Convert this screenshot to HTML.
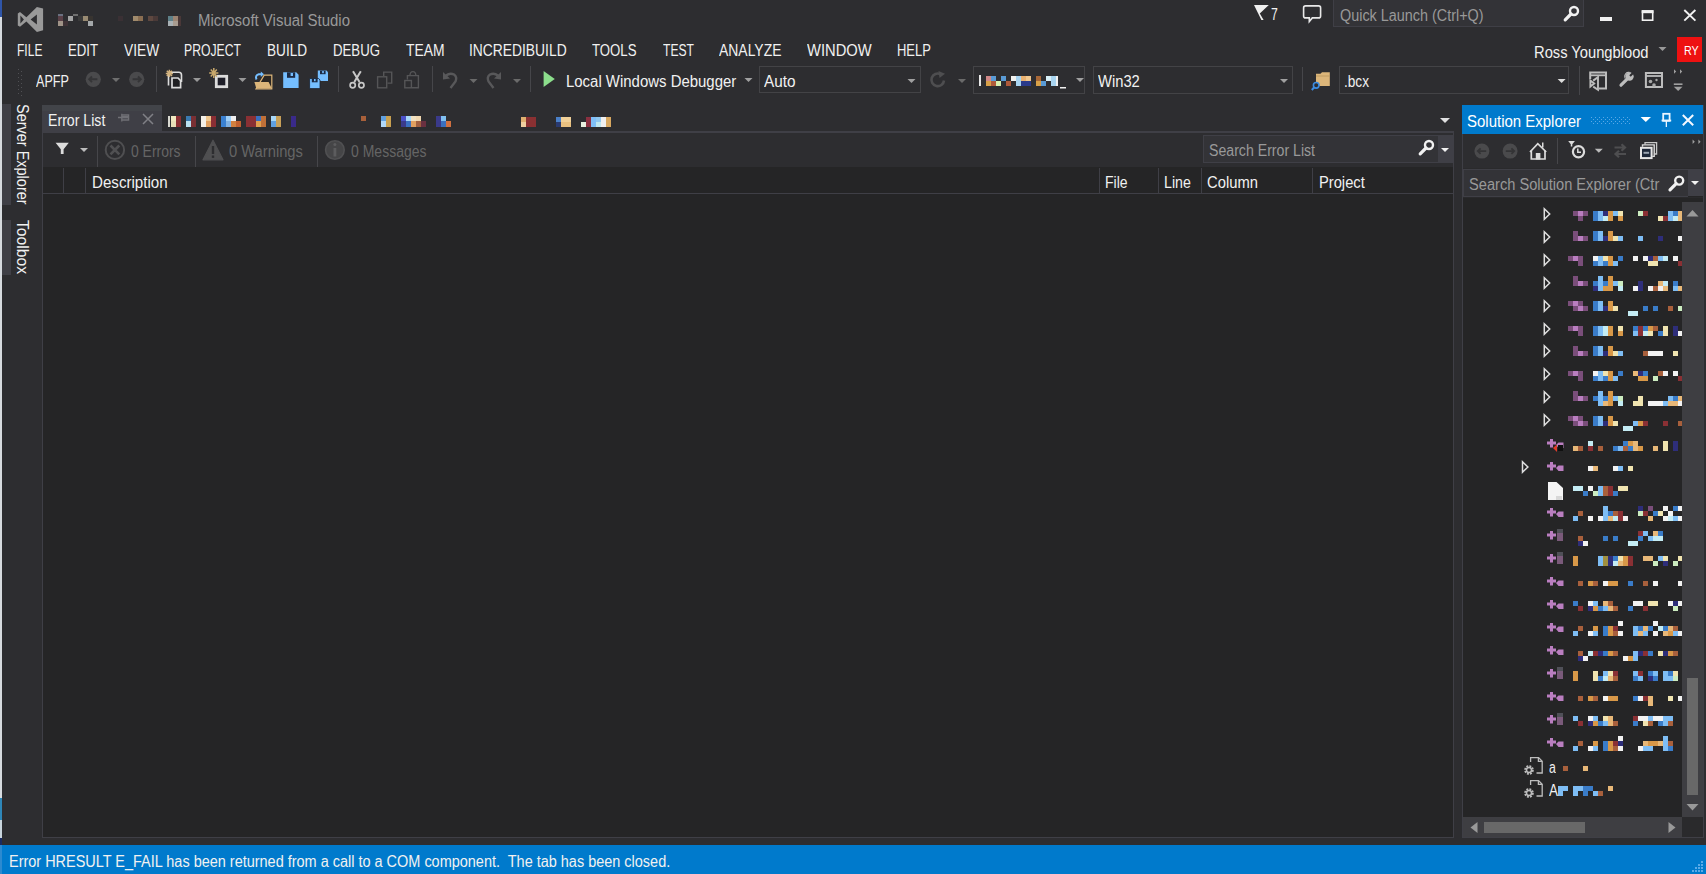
<!DOCTYPE html>
<html><head><meta charset="utf-8">
<style>
*{margin:0;padding:0;box-sizing:border-box}
html,body{width:1706px;height:874px;overflow:hidden;background:#2D2D30;font-family:"Liberation Sans",sans-serif;color:#F1F1F1;position:relative}
.a{position:absolute}
.t{position:absolute;white-space:nowrap;line-height:1}
svg{shape-rendering:geometricPrecision}
</style></head><body>
<div class="a" style="left:0px;top:0px;width:2px;height:17px;background:#2F55A8;"></div>
<div class="a" style="left:0px;top:17px;width:2px;height:781px;background:#D6DADF;"></div>
<div class="a" style="left:0px;top:798px;width:2px;height:22px;background:#2E86B8;"></div>
<div class="a" style="left:0px;top:820px;width:2px;height:18px;background:#C8D4DC;"></div>
<div class="a" style="left:0px;top:838px;width:2px;height:7px;background:#1A2A60;"></div>
<div class="a" style="left:0px;top:845px;width:2px;height:29px;background:#2C8AD0;"></div>
<svg class="a" style="left:10px;top:0px" width="40" height="40" viewBox="10 0 40 40"><path d="M17.8 13.4 L20 12 L26.4 17.3 L36.9 6.9 L43.1 8.6 L43.1 30.3 L36.9 32.1 L26.4 21.6 L20 26.8 L17.8 25.6 Z M20.4 15.6 L20.4 23.4 L23.9 19.5 Z M30.6 19.4 L36.9 24.4 L36.9 14.5 Z" fill="#999999" fill-rule="evenodd"/></svg>
<div class="t" style="left:198.20px;top:13.00px;font-size:16px;color:#999999;transform:scaleX(0.9354);transform-origin:0 0;">Microsoft Visual Studio</div>
<div class="a" style="left:58px;top:14px;width:5px;height:2px;background:#6A7080;"></div>
<div class="a" style="left:58px;top:16px;width:5px;height:5px;background:#5A4048;"></div>
<div class="a" style="left:58px;top:21px;width:5px;height:5px;background:#A09488;"></div>
<div class="a" style="left:63px;top:21px;width:5px;height:5px;background:#3E3236;"></div>
<div class="a" style="left:68px;top:16px;width:5px;height:5px;background:#A4A4A4;"></div>
<div class="a" style="left:73px;top:14px;width:5px;height:2px;background:#6E6E6E;"></div>
<div class="a" style="left:78px;top:16px;width:5px;height:5px;background:#3A3A3A;"></div>
<div class="a" style="left:83px;top:16px;width:5px;height:5px;background:#988A72;"></div>
<div class="a" style="left:88px;top:16px;width:5px;height:5px;background:#383430;"></div>
<div class="a" style="left:88px;top:21px;width:5px;height:5px;background:#A4A8AA;"></div>
<div class="a" style="left:118px;top:16px;width:5px;height:5px;background:#3A3034;"></div>
<div class="a" style="left:133px;top:16px;width:5px;height:5px;background:#A08A6C;"></div>
<div class="a" style="left:138px;top:16px;width:5px;height:5px;background:#8A6E52;"></div>
<div class="a" style="left:148px;top:16px;width:5px;height:5px;background:#5E4840;"></div>
<div class="a" style="left:153px;top:16px;width:5px;height:5px;background:#4A3A38;"></div>
<div class="a" style="left:168px;top:16px;width:5px;height:5px;background:#5E8088;"></div>
<div class="a" style="left:173px;top:16px;width:5px;height:5px;background:#9C8472;"></div>
<div class="a" style="left:168px;top:21px;width:5px;height:5px;background:#A8B0B4;"></div>
<div class="a" style="left:173px;top:21px;width:5px;height:5px;background:#A89C90;"></div>
<div class="a" style="left:178px;top:16px;width:3px;height:10px;background:#4A3838;"></div>
<div class="t" style="left:17.40px;top:43.00px;font-size:16px;color:#F1F1F1;transform:scaleX(0.7526);transform-origin:0 0;">FILE</div>
<div class="t" style="left:68.40px;top:43.00px;font-size:16px;color:#F1F1F1;transform:scaleX(0.8247);transform-origin:0 0;">EDIT</div>
<div class="t" style="left:123.80px;top:43.00px;font-size:16px;color:#F1F1F1;transform:scaleX(0.8585);transform-origin:0 0;">VIEW</div>
<div class="t" style="left:184.30px;top:43.00px;font-size:16px;color:#F1F1F1;transform:scaleX(0.7639);transform-origin:0 0;">PROJECT</div>
<div class="t" style="left:267.30px;top:43.00px;font-size:16px;color:#F1F1F1;transform:scaleX(0.8508);transform-origin:0 0;">BUILD</div>
<div class="t" style="left:333.40px;top:43.00px;font-size:16px;color:#F1F1F1;transform:scaleX(0.8246);transform-origin:0 0;">DEBUG</div>
<div class="t" style="left:406.00px;top:43.00px;font-size:16px;color:#F1F1F1;transform:scaleX(0.8674);transform-origin:0 0;">TEAM</div>
<div class="t" style="left:469.20px;top:43.00px;font-size:16px;color:#F1F1F1;transform:scaleX(0.8646);transform-origin:0 0;">INCREDIBUILD</div>
<div class="t" style="left:592.20px;top:43.00px;font-size:16px;color:#F1F1F1;transform:scaleX(0.8241);transform-origin:0 0;">TOOLS</div>
<div class="t" style="left:662.50px;top:43.00px;font-size:16px;color:#F1F1F1;transform:scaleX(0.7561);transform-origin:0 0;">TEST</div>
<div class="t" style="left:719.10px;top:43.00px;font-size:16px;color:#F1F1F1;transform:scaleX(0.8711);transform-origin:0 0;">ANALYZE</div>
<div class="t" style="left:806.90px;top:43.00px;font-size:16px;color:#F1F1F1;transform:scaleX(0.9210);transform-origin:0 0;">WINDOW</div>
<div class="t" style="left:897.20px;top:43.00px;font-size:16px;color:#F1F1F1;transform:scaleX(0.8096);transform-origin:0 0;">HELP</div>
<div class="a" style="left:18px;top:69px;width:1px;height:1px;background:#505054;"></div>
<div class="a" style="left:21px;top:71px;width:1px;height:1px;background:#505054;"></div>
<div class="a" style="left:18px;top:73px;width:1px;height:1px;background:#505054;"></div>
<div class="a" style="left:21px;top:75px;width:1px;height:1px;background:#505054;"></div>
<div class="a" style="left:18px;top:77px;width:1px;height:1px;background:#505054;"></div>
<div class="a" style="left:21px;top:79px;width:1px;height:1px;background:#505054;"></div>
<div class="a" style="left:18px;top:81px;width:1px;height:1px;background:#505054;"></div>
<div class="a" style="left:21px;top:83px;width:1px;height:1px;background:#505054;"></div>
<div class="a" style="left:18px;top:85px;width:1px;height:1px;background:#505054;"></div>
<div class="a" style="left:21px;top:87px;width:1px;height:1px;background:#505054;"></div>
<div class="a" style="left:18px;top:89px;width:1px;height:1px;background:#505054;"></div>
<div class="a" style="left:21px;top:91px;width:1px;height:1px;background:#505054;"></div>
<div class="a" style="left:18px;top:93px;width:1px;height:1px;background:#505054;"></div>
<div class="a" style="left:21px;top:95px;width:1px;height:1px;background:#505054;"></div>
<div class="t" style="left:36.00px;top:74.00px;font-size:16px;color:#F1F1F1;transform:scaleX(0.7904);transform-origin:0 0;">APFP</div>
<svg class="a" style="left:83px;top:69px" width="64" height="21" viewBox="83 69 64 21"><circle cx="93.3" cy="79.3" r="7.6" fill="#4A4A4C"/><path d="M89.2 79.3 H97.4 M92 76.5 L89.2 79.3 L92 82.1" fill="none" stroke="#353537" stroke-width="1.9"/><circle cx="136.7" cy="79.3" r="7.6" fill="#4A4A4C"/><path d="M132.6 79.3 H140.8 M138 76.5 L140.8 79.3 L138 82.1" fill="none" stroke="#353537" stroke-width="1.9"/></svg>
<svg class="a" style="left:111px;top:77px" width="11" height="7" viewBox="111 77 11 7"><path d="M112 78 L120 78 L116.0 82 Z" fill="#6E6E6E"/></svg>
<div class="a" style="left:156px;top:66px;width:1px;height:26px;background:#46464A;"></div>
<svg class="a" style="left:164px;top:66px" width="22" height="26" viewBox="164 66 22 26"><path d="M168.5 85.5 V74 Q168.5 72.2 170.3 72.2 H178.8 Q181.5 72.2 181.5 75 V82" fill="none" stroke="#DCDCDC" stroke-width="1.6"/><path d="M172 87.6 V78 H178 L180.6 80.6 V87.6 Z" fill="#1F1F22" stroke="#DCDCDC" stroke-width="1.7"/><path d="M169.4 69.8 V77 M165.8 73.4 H173 M166.8 70.8 L172 76 M172 70.8 L166.8 76" stroke="#D2B27E" stroke-width="1.5"/></svg>
<svg class="a" style="left:192px;top:77px" width="11" height="7" viewBox="192 77 11 7"><path d="M193 78 L201 78 L197.0 82 Z" fill="#999999"/></svg>
<svg class="a" style="left:206px;top:66px" width="25" height="26" viewBox="206 66 25 26"><rect x="216.3" y="76.3" width="10.4" height="10.4" fill="#1E1E28" stroke="#DCDCDC" stroke-width="2.8"/><path d="M213.8 68 V78 M209.2 73 H218.4 M210.8 69.5 L216.8 76.5 M216.8 69.5 L210.8 76.5" stroke="#C8A86C" stroke-width="1.5"/></svg>
<svg class="a" style="left:237px;top:77px" width="11" height="7" viewBox="237 77 11 7"><path d="M238.5 78 L246.5 78 L242.5 82 Z" fill="#999999"/></svg>
<svg class="a" style="left:252px;top:68px" width="23" height="23" viewBox="252 68 23 23"><path d="M264.2 75.2 H271.8 V89 H256 Z" fill="#2A2622" stroke="#DCB67A" stroke-width="1.2"/><path d="M254.4 82 H268.6 L272 88.8 H256.4 Z" fill="#DCB67A"/><path d="M256.5 79.5 Q254.8 75.5 258.8 74.3 H262" fill="none" stroke="#75BEFF" stroke-width="2"/><path d="M260.8 71.5 L264 74.3 L260.8 77.1 Z" fill="#75BEFF"/></svg>
<svg class="a" style="left:281px;top:70px" width="19" height="20" viewBox="281 70 19 20"><path d="M283.2 72.3 H296.2 L298.6 74.7 V87.9 H283.2 Z" fill="#75BEFF"/><rect x="287" y="72.3" width="8.2" height="5.5" fill="#1B2A44"/><rect x="290.6" y="73" width="2.4" height="3" fill="#75BEFF"/></svg>
<svg class="a" style="left:307px;top:68px" width="23" height="23" viewBox="307 68 23 23"><path d="M317.8 70.6 H326.5 L328 72.2 V81 H317.8 Z" fill="#75BEFF"/><rect x="320" y="70.6" width="5.6" height="3.6" fill="#1B2A44"/><rect x="322.2" y="71" width="1.6" height="2.2" fill="#75BEFF"/><path d="M309.6 78.5 H318.6 L320 80 V88.6 H309.6 Z" fill="#75BEFF" stroke="#1B2230" stroke-width="0.8"/><rect x="311.8" y="78.5" width="5.8" height="3.8" fill="#1B2A44"/><rect x="314" y="79" width="1.6" height="2.2" fill="#75BEFF"/></svg>
<div class="a" style="left:338px;top:66px;width:1px;height:26px;background:#46464A;"></div>
<svg class="a" style="left:346px;top:68px" width="22" height="23" viewBox="346 68 22 23"><path d="M353 71.3 L359.5 82 M360.8 71.3 L354.3 82" stroke="#C8C8C8" stroke-width="2"/><circle cx="352.7" cy="85.2" r="2.6" fill="none" stroke="#C8C8C8" stroke-width="1.7"/><circle cx="361.4" cy="85.2" r="2.6" fill="none" stroke="#C8C8C8" stroke-width="1.7"/></svg>
<svg class="a" style="left:374px;top:68px" width="21" height="23" viewBox="374 68 21 23"><path d="M383.7 76 V72.1 H391.7 V83.1 H387.5" fill="none" stroke="#555557" stroke-width="1.4"/><rect x="377.6" y="76.8" width="9.1" height="11" fill="none" stroke="#555557" stroke-width="1.4"/></svg>
<svg class="a" style="left:402px;top:68px" width="19" height="23" viewBox="402 68 19 23"><path d="M407.4 79.5 V75.6 H418.4 V87.8 H412" fill="none" stroke="#555557" stroke-width="1.4"/><path d="M410 75.6 Q410 71.6 412.9 71.6 Q415.8 71.6 415.8 75.6" fill="none" stroke="#555557" stroke-width="1.4"/><rect x="404.8" y="80.5" width="6.6" height="7.3" fill="none" stroke="#555557" stroke-width="1.4"/></svg>
<div class="a" style="left:432px;top:66px;width:1px;height:26px;background:#46464A;"></div>
<svg class="a" style="left:440px;top:68px" width="64" height="23" viewBox="440 68 64 23"><path d="M446 75.5 Q450 72.5 454 74.5 Q457.5 77 455.5 81.5 L450.5 88" fill="none" stroke="#58585A" stroke-width="2.4"/><path d="M443 72 L443 79.5 L450 78.5 Z" fill="#58585A"/><path d="M498 75.5 Q494 72.5 490 74.5 Q486.5 77 488.5 81.5 L493.5 88" fill="none" stroke="#58585A" stroke-width="2.4"/><path d="M501 72 L501 79.5 L494 78.5 Z" fill="#58585A"/></svg>
<svg class="a" style="left:468px;top:78px" width="11" height="7" viewBox="468 78 11 7"><path d="M469.5 79 L477.5 79 L473.5 83 Z" fill="#6A6A6A"/></svg>
<svg class="a" style="left:512px;top:78px" width="11" height="7" viewBox="512 78 11 7"><path d="M513 79 L521 79 L517.0 83 Z" fill="#6A6A6A"/></svg>
<div class="a" style="left:530px;top:66px;width:1px;height:26px;background:#46464A;"></div>
<svg class="a" style="left:541px;top:69px" width="16" height="20" viewBox="541 69 16 20"><path d="M543.6 71 L554.8 79 L543.6 87 Z" fill="#8CDE8C"/></svg>
<div class="t" style="left:565.50px;top:74.00px;font-size:16px;color:#F1F1F1;transform:scaleX(0.9339);transform-origin:0 0;">Local Windows Debugger</div>
<svg class="a" style="left:743px;top:77px" width="11" height="7" viewBox="743 77 11 7"><path d="M744.5 78 L752.5 78 L748.5 82 Z" fill="#A0A0A0"/></svg>
<div class="a" style="left:759px;top:66px;width:162px;height:27px;background:#2D2D30;border:1px solid #434346;"></div>
<div class="t" style="left:764.00px;top:74.00px;font-size:16px;color:#F1F1F1;transform:scaleX(0.9576);transform-origin:0 0;">Auto</div>
<svg class="a" style="left:906px;top:78px" width="11" height="7" viewBox="906 78 11 7"><path d="M907.5 79 L915.5 79 L911.5 83 Z" fill="#A0A0A0"/></svg>
<svg class="a" style="left:928px;top:69px" width="21" height="22" viewBox="928 69 21 22"><path d="M944 80.5 A6.3 6.3 0 1 1 940.5 74.2" fill="none" stroke="#4E4E50" stroke-width="2.6"/><path d="M938.5 71 L945 73.8 L939.5 78 Z" fill="#4E4E50"/></svg>
<svg class="a" style="left:957px;top:78px" width="11" height="7" viewBox="957 78 11 7"><path d="M958 79 L966 79 L962.0 83 Z" fill="#6A6A6A"/></svg>
<div class="a" style="left:973px;top:66px;width:112px;height:28px;background:#2D2D30;border:1px solid #434346;"></div>
<svg class="a" style="left:1075px;top:77px" width="11" height="7" viewBox="1075 77 11 7"><path d="M1076 78 L1084 78 L1080.0 82 Z" fill="#A0A0A0"/></svg>
<div class="a" style="left:1093px;top:66px;width:200px;height:28px;background:#2D2D30;border:1px solid #434346;"></div>
<div class="t" style="left:1098.00px;top:74.00px;font-size:16px;color:#F1F1F1;transform:scaleX(0.9215);transform-origin:0 0;">Win32</div>
<svg class="a" style="left:1279px;top:78px" width="11" height="7" viewBox="1279 78 11 7"><path d="M1280 79 L1288 79 L1284.0 83 Z" fill="#A0A0A0"/></svg>
<div class="a" style="left:1302px;top:67px;width:1px;height:24px;background:#46464A;"></div>
<svg class="a" style="left:1310px;top:68px" width="24" height="25" viewBox="1310 68 24 25"><path d="M1316 73.8 H1320.5 L1322 72.2 H1329.8 V86 H1316 Z" fill="#DCB67A"/><path d="M1316 76 H1329.8" stroke="#B8955A" stroke-width="0.8"/><circle cx="1316.2" cy="85.3" r="2.8" fill="#2D2D30" stroke="#3C8CE0" stroke-width="1.6"/><path d="M1314.3 87.3 L1311.8 90" stroke="#3C8CE0" stroke-width="2"/></svg>
<div class="a" style="left:1339px;top:66px;width:230px;height:28px;background:#2D2D30;border:1px solid #434346;"></div>
<div class="t" style="left:1343.70px;top:74.00px;font-size:16px;color:#F1F1F1;transform:scaleX(0.8513);transform-origin:0 0;">.bcx</div>
<svg class="a" style="left:1556px;top:78px" width="11" height="7" viewBox="1556 78 11 7"><path d="M1557.6 79 L1565.6 79 L1561.6 83 Z" fill="#DCDCDC"/></svg>
<div class="a" style="left:1579px;top:66px;width:1px;height:29px;background:#46464A;"></div>
<svg class="a" style="left:1586px;top:68px" width="100" height="26" viewBox="1586 68 100 26"><path d="M1590.2 79 V72.4 H1606 V88.4 H1599" fill="none" stroke="#BDBDBD" stroke-width="2"/><path d="M1590 75.3 H1606.2" stroke="#BDBDBD" stroke-width="1.8"/><path d="M1590.4 80.6 L1594.2 83.6 L1590.4 86.6 Z M1593.2 80.6 L1598 77.2 V89.8 L1593.2 86.6" fill="none" stroke="#BDBDBD" stroke-width="1.9"/><path d="M1621 85.2 L1626.8 79.4" stroke="#BDBDBD" stroke-width="3.2" stroke-linecap="round"/><path d="M1626 80 A3.8 3.8 0 1 1 1633.3 74.5 L1630.5 76.8 L1629.2 75.5 L1631.4 72.7 A3.8 3.8 0 0 0 1626 80 Z" fill="#BDBDBD"/><circle cx="1629.5" cy="76.6" r="4.2" fill="#BDBDBD"/><path d="M1630 76 L1634.5 71.5" stroke="#2D2D30" stroke-width="2.2"/><rect x="1645.9" y="73" width="16.1" height="14" fill="none" stroke="#BDBDBD" stroke-width="2"/><path d="M1645.7 76 H1662.2" stroke="#BDBDBD" stroke-width="1.8"/><circle cx="1650.5" cy="81.5" r="1.8" fill="#A8A8A8"/><circle cx="1654" cy="85" r="1.8" fill="#A8A8A8"/><circle cx="1656.5" cy="80" r="1.2" fill="#A8A8A8"/><path d="M1674 69.3 L1676.2 71.5 L1674 73.7 Z M1680 69.3 L1682.2 71.5 L1680 73.7 Z" fill="#A0A0A0"/><rect x="1673.8" y="83.4" width="8.7" height="1.6" fill="#A0A0A0"/><path d="M1673.8 86.8 H1682.5 L1678.15 91 Z" fill="#A0A0A0"/></svg>
<svg class="a" style="left:1252px;top:3px" width="20" height="19" viewBox="1252 3 20 19"><path d="M1254 5 H1268.8 L1259.8 13.6 L1263.6 19.9 H1261.4 Z" fill="#F0F0F0"/></svg>
<div class="t" style="left:1271.40px;top:7.00px;font-size:16px;color:#F1F1F1;transform:scaleX(0.7667);transform-origin:0 0;">7</div>
<svg class="a" style="left:1300px;top:3px" width="24" height="22" viewBox="1300 3 24 22"><path d="M1305.6 5.9 H1318.6 Q1320.6 5.9 1320.6 7.9 V15.9 Q1320.6 17.9 1318.6 17.9 H1312.3 L1309.3 21.6 V17.9 H1305.6 Q1303.6 17.9 1303.6 15.9 V7.9 Q1303.6 5.9 1305.6 5.9 Z" fill="none" stroke="#E8E8E8" stroke-width="1.6"/></svg>
<div class="a" style="left:1333px;top:-1px;width:251px;height:28px;background:#333337;border:1px solid #3F3F46;"></div>
<div class="t" style="left:1339.50px;top:8.00px;font-size:16px;color:#999999;transform:scaleX(0.8997);transform-origin:0 0;">Quick Launch (Ctrl+Q)</div>
<svg class="a" style="left:1560px;top:3px" width="22" height="21" viewBox="1560 3 22 21"><circle cx="1574" cy="11" r="4" fill="none" stroke="#F1F1F1" stroke-width="2.4"/><path d="M1571 14 L1565.2 19.8" stroke="#F1F1F1" stroke-width="3.2" stroke-linecap="round"/></svg>
<div class="a" style="left:1600px;top:17px;width:12px;height:4px;background:#F1F1F1;"></div>
<svg class="a" style="left:1638px;top:6px" width="20" height="19" viewBox="1638 6 20 19"><rect x="1642.5" y="11" width="10.2" height="9.2" fill="none" stroke="#F1F1F1" stroke-width="1.6"/><rect x="1641.7" y="10.2" width="11.8" height="3" fill="#F1F1F1"/></svg>
<svg class="a" style="left:1680px;top:6px" width="20" height="19" viewBox="1680 6 20 19"><path d="M1684.3 10 L1695.4 20.6 M1695.4 10 L1684.3 20.6" stroke="#F1F1F1" stroke-width="1.9"/></svg>
<div class="t" style="left:1533.60px;top:45.00px;font-size:16px;color:#F1F1F1;transform:scaleX(0.9197);transform-origin:0 0;">Ross Youngblood</div>
<svg class="a" style="left:1657px;top:45px" width="11" height="7" viewBox="1657 45 11 7"><path d="M1658.5 46.9 L1666.5 46.9 L1662.5 50.9 Z" fill="#999999"/></svg>
<div class="a" style="left:1677px;top:37px;width:25px;height:25px;background:#EE1111;"></div>
<div class="t" style="left:1683.60px;top:44.00px;font-size:13px;color:#FFFFFF;transform:scaleX(0.8282);transform-origin:0 0;">RY</div>
<svg class="a" style="left:975px;top:70px" width="95" height="22" viewBox="975 70 95 22"><rect x="986" y="76" width="5" height="5" fill="#D08888"/><rect x="991" y="76" width="5" height="5" fill="#5A9BD5"/><rect x="1001" y="76" width="5" height="5" fill="#5A9BD5"/><rect x="1011" y="76" width="5" height="5" fill="#F2F2EE"/><rect x="1016" y="76" width="5" height="5" fill="#A8D4F0"/><rect x="1021" y="76" width="5" height="5" fill="#E8B070"/><rect x="1026" y="76" width="5" height="5" fill="#F0C890"/><rect x="1036" y="76" width="5" height="5" fill="#A86838"/><rect x="1046" y="76" width="5" height="5" fill="#D8F0F8"/><rect x="1051" y="76" width="5" height="5" fill="#A8D4F0"/><rect x="986" y="81" width="5" height="5" fill="#D8A048"/><rect x="991" y="81" width="5" height="5" fill="#B05A3A"/><rect x="996" y="81" width="5" height="5" fill="#D8F0B0"/><rect x="1006" y="81" width="5" height="5" fill="#B05A3A"/><rect x="1016" y="81" width="5" height="5" fill="#A8D4F0"/><rect x="1021" y="81" width="5" height="5" fill="#2A3A8A"/><rect x="1026" y="81" width="5" height="5" fill="#2A3A8A"/><rect x="1036" y="81" width="5" height="5" fill="#D8A048"/><rect x="1041" y="81" width="5" height="5" fill="#5A9BD5"/><rect x="1051" y="81" width="5" height="5" fill="#A8D4F0"/><rect x="979" y="75" width="2" height="11" fill="#E8E8E8"/><rect x="1056" y="76" width="2" height="10" fill="#F0F0F0"/><rect x="1060" y="87" width="6" height="1.5" fill="#F0F0F0"/></svg>
<div class="a" style="left:2px;top:104px;width:9px;height:101px;background:#3F3F46;"></div>
<div class="a" style="left:2px;top:220px;width:9px;height:55px;background:#3F3F46;"></div>
<div class="t" style="left:14px;top:104px;font-size:16px;color:#F1F1F1;writing-mode:vertical-rl;transform:scaleY(0.905);transform-origin:0 0">Server Explorer</div>
<div class="t" style="left:14px;top:220px;font-size:16px;color:#F1F1F1;writing-mode:vertical-rl;transform:scaleY(0.98);transform-origin:0 0">Toolbox</div>
<div class="a" style="left:42px;top:105px;width:120px;height:26px;background:#3F3F46;"></div>
<div class="a" style="left:42px;top:105px;width:120px;height:6px;background:#424449;"></div>
<div class="t" style="left:47.60px;top:113.00px;font-size:16px;color:#F1F1F1;transform:scaleX(0.8831);transform-origin:0 0;">Error List</div>
<svg class="a" style="left:116px;top:111px" width="15" height="13" viewBox="116 111 15 13"><path d="M118 117.5 H121.8 M121.8 113.8 V121.4 M121.8 115 H128.6 V120 H121.8" fill="none" stroke="#707076" stroke-width="1.3"/><rect x="122" y="116" width="6.2" height="2.4" fill="#707076"/></svg>
<svg class="a" style="left:140px;top:111px" width="16" height="16" viewBox="140 111 16 16"><path d="M143 114 L153 124 M153 114 L143 124" stroke="#808086" stroke-width="1.5"/></svg>
<div class="a" style="left:168px;top:116px;width:2px;height:11px;background:#D8D8D0;"></div>
<div class="a" style="left:171px;top:116px;width:5px;height:5px;background:#F0E8C0;"></div>
<div class="a" style="left:171px;top:121px;width:5px;height:6px;background:#E8E0B8;"></div>
<div class="a" style="left:176px;top:116px;width:5px;height:11px;background:#8A3034;"></div>
<div class="a" style="left:186px;top:116px;width:5px;height:5px;background:#3A7AB0;"></div>
<div class="a" style="left:186px;top:121px;width:5px;height:6px;background:#B8E0F0;"></div>
<div class="a" style="left:191px;top:116px;width:5px;height:11px;background:#7A3034;"></div>
<div class="a" style="left:201px;top:116px;width:5px;height:11px;background:#F4F0E8;"></div>
<div class="a" style="left:206px;top:116px;width:5px;height:5px;background:#F0C890;"></div>
<div class="a" style="left:206px;top:121px;width:5px;height:6px;background:#E0A060;"></div>
<div class="a" style="left:211px;top:116px;width:5px;height:11px;background:#8A2E34;"></div>
<div class="a" style="left:221px;top:116px;width:5px;height:11px;background:#3A80D0;"></div>
<div class="a" style="left:226px;top:116px;width:5px;height:5px;background:#A0D0F8;"></div>
<div class="a" style="left:226px;top:121px;width:5px;height:6px;background:#80B0E0;"></div>
<div class="a" style="left:231px;top:116px;width:5px;height:5px;background:#F0F0F0;"></div>
<div class="a" style="left:231px;top:121px;width:5px;height:6px;background:#D08040;"></div>
<div class="a" style="left:236px;top:121px;width:5px;height:6px;background:#C06030;"></div>
<div class="a" style="left:246px;top:116px;width:10px;height:11px;background:#8A3034;"></div>
<div class="a" style="left:256px;top:116px;width:5px;height:5px;background:#3A70C0;"></div>
<div class="a" style="left:256px;top:121px;width:5px;height:6px;background:#E0A050;"></div>
<div class="a" style="left:261px;top:116px;width:5px;height:11px;background:#C07038;"></div>
<div class="a" style="left:271px;top:116px;width:5px;height:5px;background:#A8D8F8;"></div>
<div class="a" style="left:271px;top:121px;width:5px;height:6px;background:#60A0E0;"></div>
<div class="a" style="left:276px;top:116px;width:5px;height:11px;background:#C8A058;"></div>
<div class="a" style="left:291px;top:116px;width:5px;height:11px;background:#3A2A8A;"></div>
<div class="a" style="left:361px;top:116px;width:5px;height:5px;background:#A8603A;"></div>
<div class="a" style="left:381px;top:116px;width:5px;height:5px;background:#60A0E0;"></div>
<div class="a" style="left:381px;top:121px;width:5px;height:6px;background:#B0D8F8;"></div>
<div class="a" style="left:386px;top:116px;width:5px;height:11px;background:#C8A050;"></div>
<div class="a" style="left:401px;top:116px;width:5px;height:5px;background:#4A50C8;"></div>
<div class="a" style="left:401px;top:121px;width:5px;height:6px;background:#3A3A8A;"></div>
<div class="a" style="left:406px;top:116px;width:5px;height:5px;background:#A8D8F8;"></div>
<div class="a" style="left:406px;top:121px;width:5px;height:6px;background:#3A70C0;"></div>
<div class="a" style="left:411px;top:116px;width:5px;height:5px;background:#F0E0C0;"></div>
<div class="a" style="left:411px;top:121px;width:5px;height:6px;background:#E0A060;"></div>
<div class="a" style="left:416px;top:116px;width:5px;height:5px;background:#F0D8B0;"></div>
<div class="a" style="left:416px;top:121px;width:5px;height:6px;background:#A06040;"></div>
<div class="a" style="left:421px;top:121px;width:5px;height:6px;background:#6A3040;"></div>
<div class="a" style="left:521px;top:117px;width:5px;height:5px;background:#E0B070;"></div>
<div class="a" style="left:521px;top:122px;width:5px;height:5px;background:#F0D0A0;"></div>
<div class="a" style="left:526px;top:117px;width:10px;height:10px;background:#8A3032;"></div>
<div class="a" style="left:556px;top:117px;width:5px;height:5px;background:#4A80C8;"></div>
<div class="a" style="left:556px;top:122px;width:5px;height:5px;background:#2A3A70;"></div>
<div class="a" style="left:561px;top:117px;width:10px;height:5px;background:#F0D098;"></div>
<div class="a" style="left:561px;top:122px;width:10px;height:5px;background:#E8C080;"></div>
<div class="a" style="left:581px;top:122px;width:5px;height:5px;background:#E8F0E0;"></div>
<div class="a" style="left:586px;top:117px;width:5px;height:10px;background:#8A3040;"></div>
<div class="a" style="left:591px;top:117px;width:5px;height:10px;background:#80C0F8;"></div>
<div class="a" style="left:596px;top:117px;width:5px;height:5px;background:#90C8F0;"></div>
<div class="a" style="left:596px;top:122px;width:5px;height:5px;background:#C0E8F0;"></div>
<div class="a" style="left:601px;top:117px;width:5px;height:10px;background:#F0F0F0;"></div>
<div class="a" style="left:606px;top:117px;width:5px;height:10px;background:#D8A860;"></div>
<div class="a" style="left:436px;top:116px;width:5px;height:11px;background:#3A3A8A;"></div>
<div class="a" style="left:441px;top:116px;width:5px;height:5px;background:#80C0F0;"></div>
<div class="a" style="left:441px;top:121px;width:5px;height:6px;background:#3A70C0;"></div>
<div class="a" style="left:446px;top:121px;width:5px;height:6px;background:#D07040;"></div>
<svg class="a" style="left:1439px;top:117px" width="13" height="8" viewBox="1439 117 13 8"><path d="M1440 118 L1450 118 L1445.0 123 Z" fill="#E0E0E0"/></svg>
<div class="a" style="left:42px;top:131px;width:1412px;height:707px;background:#3F3F46;"></div>
<div class="a" style="left:43px;top:133px;width:1410px;height:704px;background:#252526;"></div>
<div class="a" style="left:43px;top:133px;width:1410px;height:34px;background:#2D2D30;"></div>
<svg class="a" style="left:54px;top:140px" width="18" height="17" viewBox="54 140 18 17"><path d="M55.6 142.8 H68.8 L63.6 149.2 V154 H60.8 V149.2 Z" fill="#DCDCDC"/></svg>
<svg class="a" style="left:79px;top:147px" width="11" height="7" viewBox="79 147 11 7"><path d="M80 148 L88 148 L84.0 152 Z" fill="#BBBBBB"/></svg>
<div class="a" style="left:97px;top:136px;width:1px;height:31px;background:#46464A;"></div>
<div class="a" style="left:195px;top:136px;width:1px;height:31px;background:#46464A;"></div>
<div class="a" style="left:317px;top:136px;width:1px;height:31px;background:#46464A;"></div>
<svg class="a" style="left:102px;top:137px" width="26" height="26" viewBox="102 137 26 26"><circle cx="114.9" cy="149.9" r="9.2" fill="none" stroke="#4F4F51" stroke-width="2"/><path d="M110.5 145.5 L119.3 154.3 M119.3 145.5 L110.5 154.3" stroke="#505052" stroke-width="2.6"/></svg>
<div class="t" style="left:131.40px;top:144.00px;font-size:16px;color:#656565;transform:scaleX(0.8702);transform-origin:0 0;">0 Errors</div>
<svg class="a" style="left:200px;top:137px" width="26" height="26" viewBox="200 137 26 26"><path d="M213 140.2 L223 159.8 H203 Z" fill="#4F4F51" stroke="#4F4F51" stroke-width="1.2" stroke-linejoin="round"/><rect x="211.8" y="146" width="2.4" height="8" fill="#2D2D30"/><rect x="211.8" y="155.5" width="2.4" height="2.4" fill="#2D2D30"/></svg>
<div class="t" style="left:229.30px;top:144.00px;font-size:16px;color:#656565;transform:scaleX(0.9196);transform-origin:0 0;">0 Warnings</div>
<svg class="a" style="left:322px;top:137px" width="26" height="26" viewBox="322 137 26 26"><circle cx="334.9" cy="150" r="9.3" fill="#454547" stroke="#505052" stroke-width="1.6"/><rect x="333.5" y="148" width="2.8" height="8.5" fill="#5C5C5E"/><circle cx="334.9" cy="144.6" r="1.5" fill="#5C5C5E"/></svg>
<div class="t" style="left:351.20px;top:144.00px;font-size:16px;color:#656565;transform:scaleX(0.8754);transform-origin:0 0;">0 Messages</div>
<div class="a" style="left:1203px;top:135px;width:236px;height:28px;background:#333337;border:1px solid #3F3F46;"></div>
<div class="a" style="left:1438px;top:135px;width:15px;height:28px;background:#3F3F46;"></div>
<div class="t" style="left:1209.00px;top:143.00px;font-size:16px;color:#999999;transform:scaleX(0.8833);transform-origin:0 0;">Search Error List</div>
<svg class="a" style="left:1414px;top:139px" width="24" height="21" viewBox="1414 139 24 21"><circle cx="1429" cy="145" r="4" fill="none" stroke="#F1F1F1" stroke-width="2.4"/><path d="M1426 148 L1420.2 153.8" stroke="#F1F1F1" stroke-width="3.2" stroke-linecap="round"/></svg>
<svg class="a" style="left:1440px;top:147px" width="11" height="7" viewBox="1440 147 11 7"><path d="M1441 148 L1449 148 L1445.0 152 Z" fill="#F1F1F1"/></svg>
<div class="a" style="left:43px;top:167px;width:1410px;height:26px;background:#252526;"></div>
<div class="a" style="left:43px;top:193px;width:1410px;height:1px;background:#3F3F46;"></div>
<div class="a" style="left:63px;top:168px;width:1px;height:25px;background:#3F3F46;"></div>
<div class="a" style="left:85px;top:168px;width:1px;height:25px;background:#3F3F46;"></div>
<div class="a" style="left:1099px;top:168px;width:1px;height:25px;background:#3F3F46;"></div>
<div class="a" style="left:1158px;top:168px;width:1px;height:25px;background:#3F3F46;"></div>
<div class="a" style="left:1201px;top:168px;width:1px;height:25px;background:#3F3F46;"></div>
<div class="a" style="left:1312px;top:168px;width:1px;height:25px;background:#3F3F46;"></div>
<div class="t" style="left:91.60px;top:175.00px;font-size:16px;color:#F1F1F1;transform:scaleX(0.9450);transform-origin:0 0;">Description</div>
<div class="t" style="left:1105.10px;top:175.00px;font-size:16px;color:#F1F1F1;transform:scaleX(0.8738);transform-origin:0 0;">File</div>
<div class="t" style="left:1164.10px;top:175.00px;font-size:16px;color:#F1F1F1;transform:scaleX(0.8860);transform-origin:0 0;">Line</div>
<div class="t" style="left:1206.90px;top:175.00px;font-size:16px;color:#F1F1F1;transform:scaleX(0.9231);transform-origin:0 0;">Column</div>
<div class="t" style="left:1318.50px;top:175.00px;font-size:16px;color:#F1F1F1;transform:scaleX(0.9186);transform-origin:0 0;">Project</div>
<div class="a" style="left:1462px;top:105px;width:242px;height:733px;background:#3F3F46;"></div>
<div class="a" style="left:1463px;top:134px;width:240px;height:703px;background:#252526;"></div>
<div class="a" style="left:1462px;top:105px;width:241px;height:29px;background:#007ACC;"></div>
<div class="t" style="left:1467.00px;top:114.00px;font-size:16px;color:#FFFFFF;transform:scaleX(0.9363);transform-origin:0 0;">Solution Explorer</div>
<svg class="a" style="left:1588px;top:114px" width="46" height="12" viewBox="1588 114 46 12"><rect x="1591" y="117" width="1" height="1" fill="#5AA8E6"/><rect x="1593" y="119" width="1" height="1" fill="#5AA8E6"/><rect x="1591" y="121" width="1" height="1" fill="#5AA8E6"/><rect x="1593" y="123" width="1" height="1" fill="#5AA8E6"/><rect x="1595" y="117" width="1" height="1" fill="#5AA8E6"/><rect x="1597" y="119" width="1" height="1" fill="#5AA8E6"/><rect x="1595" y="121" width="1" height="1" fill="#5AA8E6"/><rect x="1597" y="123" width="1" height="1" fill="#5AA8E6"/><rect x="1599" y="117" width="1" height="1" fill="#5AA8E6"/><rect x="1601" y="119" width="1" height="1" fill="#5AA8E6"/><rect x="1599" y="121" width="1" height="1" fill="#5AA8E6"/><rect x="1601" y="123" width="1" height="1" fill="#5AA8E6"/><rect x="1603" y="117" width="1" height="1" fill="#5AA8E6"/><rect x="1605" y="119" width="1" height="1" fill="#5AA8E6"/><rect x="1603" y="121" width="1" height="1" fill="#5AA8E6"/><rect x="1605" y="123" width="1" height="1" fill="#5AA8E6"/><rect x="1607" y="117" width="1" height="1" fill="#5AA8E6"/><rect x="1609" y="119" width="1" height="1" fill="#5AA8E6"/><rect x="1607" y="121" width="1" height="1" fill="#5AA8E6"/><rect x="1609" y="123" width="1" height="1" fill="#5AA8E6"/><rect x="1611" y="117" width="1" height="1" fill="#5AA8E6"/><rect x="1613" y="119" width="1" height="1" fill="#5AA8E6"/><rect x="1611" y="121" width="1" height="1" fill="#5AA8E6"/><rect x="1613" y="123" width="1" height="1" fill="#5AA8E6"/><rect x="1615" y="117" width="1" height="1" fill="#5AA8E6"/><rect x="1617" y="119" width="1" height="1" fill="#5AA8E6"/><rect x="1615" y="121" width="1" height="1" fill="#5AA8E6"/><rect x="1617" y="123" width="1" height="1" fill="#5AA8E6"/><rect x="1619" y="117" width="1" height="1" fill="#5AA8E6"/><rect x="1621" y="119" width="1" height="1" fill="#5AA8E6"/><rect x="1619" y="121" width="1" height="1" fill="#5AA8E6"/><rect x="1621" y="123" width="1" height="1" fill="#5AA8E6"/><rect x="1623" y="117" width="1" height="1" fill="#5AA8E6"/><rect x="1625" y="119" width="1" height="1" fill="#5AA8E6"/><rect x="1623" y="121" width="1" height="1" fill="#5AA8E6"/><rect x="1625" y="123" width="1" height="1" fill="#5AA8E6"/><rect x="1627" y="117" width="1" height="1" fill="#5AA8E6"/><rect x="1629" y="119" width="1" height="1" fill="#5AA8E6"/><rect x="1627" y="121" width="1" height="1" fill="#5AA8E6"/><rect x="1629" y="123" width="1" height="1" fill="#5AA8E6"/></svg>
<svg class="a" style="left:1639px;top:116px" width="14" height="8" viewBox="1639 116 14 8"><path d="M1640.6 117 L1651.0 117 L1645.8 122 Z" fill="#FFFFFF"/></svg>
<svg class="a" style="left:1658px;top:110px" width="18" height="20" viewBox="1658 110 18 20"><rect x="1663.2" y="113.8" width="6.4" height="7" fill="none" stroke="#E8F4FF" stroke-width="1.8"/><rect x="1661.6" y="119.6" width="9.6" height="1.8" fill="#E8F4FF"/><rect x="1665.7" y="121" width="1.3" height="6" fill="#E8F4FF"/></svg>
<svg class="a" style="left:1678px;top:110px" width="20" height="20" viewBox="1678 110 20 20"><path d="M1682.8 115 L1693.2 125.2 M1693.2 115 L1682.8 125.2" stroke="#F4F8FF" stroke-width="2"/></svg>
<div class="a" style="left:1463px;top:134px;width:240px;height:34px;background:#2D2D30;"></div>
<svg class="a" style="left:1470px;top:139px" width="52" height="24" viewBox="1470 139 52 24"><circle cx="1481.9" cy="151.1" r="7.5" fill="#4A4A4C"/><path d="M1477.8 151.1 H1486.2 M1480.6 148.3 L1477.8 151.1 L1480.6 153.9" fill="none" stroke="#343436" stroke-width="1.8"/><circle cx="1510.1" cy="151.1" r="7.5" fill="#4A4A4C"/><path d="M1505.8 151.1 H1514.2 M1511.4 148.3 L1514.2 151.1 L1511.4 153.9" fill="none" stroke="#343436" stroke-width="1.8"/></svg>
<svg class="a" style="left:1526px;top:139px" width="24" height="24" viewBox="1526 139 24 24"><path d="M1530 152 L1537.8 143.6 L1546.2 152" fill="none" stroke="#DCDCDC" stroke-width="1.7"/><path d="M1531.3 150.5 V159 H1545 V150.5" fill="none" stroke="#DCDCDC" stroke-width="1.7"/><rect x="1535.8" y="153" width="4.6" height="6.5" fill="#DCDCDC"/><rect x="1542" y="142.5" width="1.5" height="5" fill="#DCDCDC"/></svg>
<div class="a" style="left:1557px;top:138px;width:1px;height:26px;background:#46464A;"></div>
<svg class="a" style="left:1566px;top:139px" width="40" height="23" viewBox="1566 139 40 23"><path d="M1568.2 141 H1574.9 L1572.3 144.3 V146.5 H1570.8 V144.3 Z" fill="#DCDCDC"/><circle cx="1578.5" cy="151.8" r="5.6" fill="none" stroke="#DCDCDC" stroke-width="2.2"/><path d="M1577.8 148.5 V152.3 H1581" fill="none" stroke="#DCDCDC" stroke-width="1.5"/></svg>
<svg class="a" style="left:1593px;top:147px" width="11" height="7" viewBox="1593 147 11 7"><path d="M1594.8 148.8 L1602.8 148.8 L1598.8 152.8 Z" fill="#BBBBBB"/></svg>
<svg class="a" style="left:1610px;top:140px" width="20" height="20" viewBox="1610 140 20 20"><path d="M1614.5 147.5 H1624.5 M1621.5 144.2 L1625 147.5 L1621.5 150.8" fill="none" stroke="#4E4E50" stroke-width="2.2"/><path d="M1626 154 H1616 M1619 150.7 L1615.5 154 L1619 157.3" fill="none" stroke="#4E4E50" stroke-width="2.2"/></svg>
<svg class="a" style="left:1636px;top:139px" width="24" height="23" viewBox="1636 139 24 23"><path d="M1645 144.5 V142.6 H1656.6 V154 H1654.6" fill="none" stroke="#C8C8C8" stroke-width="1.3"/><path d="M1642.5 146.8 V144.9 H1654.2 V156.4 H1652.3" fill="none" stroke="#DCDCDC" stroke-width="1.4"/><rect x="1641" y="147.8" width="10.6" height="10.3" fill="#1C2638" stroke="#E6E6E6" stroke-width="2"/><rect x="1643.5" y="151.8" width="5.6" height="2" fill="#9AA4B0"/></svg>
<svg class="a" style="left:1690px;top:137px" width="13" height="10" viewBox="1690 137 13 10"><path d="M1692.6 139.5 L1694.8 141.7 L1692.6 143.9 Z M1698.4 139.5 L1700.6 141.7 L1698.4 143.9 Z" fill="#A0A0A0"/></svg>
<div class="a" style="left:1463px;top:168px;width:240px;height:1px;background:#2A2A2C;"></div>
<div class="a" style="left:1463px;top:169px;width:225px;height:28px;background:#3F3F46;"></div>
<div class="a" style="left:1464px;top:170px;width:224px;height:26px;background:#333337;"></div>
<div class="a" style="left:1688px;top:169px;width:15px;height:27px;background:#3F3F46;"></div>
<div class="t" style="left:1469.20px;top:177.00px;font-size:16px;color:#999999;transform:scaleX(0.9144);transform-origin:0 0;">Search Solution Explorer (Ctr</div>
<svg class="a" style="left:1664px;top:172px" width="24" height="22" viewBox="1664 172 24 22"><circle cx="1679.2" cy="180.6" r="4" fill="none" stroke="#F1F1F1" stroke-width="2.4"/><path d="M1676.2 183.6 L1670 189.8" stroke="#F1F1F1" stroke-width="3.2" stroke-linecap="round"/></svg>
<svg class="a" style="left:1690px;top:180px" width="11" height="7" viewBox="1690 180 11 7"><path d="M1691 181 L1699 181 L1695.0 185 Z" fill="#F1F1F1"/></svg>
<div class="a" style="left:1463px;top:197px;width:240px;height:1px;background:#2A2A2C;"></div>
<div class="a" style="left:1682px;top:202px;width:21px;height:615px;background:#3E3E42;"></div>
<div class="a" style="left:1687px;top:678px;width:11px;height:117px;background:#686868;"></div>
<svg class="a" style="left:1682px;top:200px" width="21" height="20" viewBox="1682 200 21 20"><path d="M1686.5 216.6 L1692.5 210 L1698.5 216.6 Z" fill="#999999"/></svg>
<svg class="a" style="left:1682px;top:800px" width="21" height="14" viewBox="1682 800 21 14"><path d="M1686.5 804 L1692.5 810.5 L1698.5 804 Z" fill="#999999"/></svg>
<div class="a" style="left:1463px;top:817px;width:219px;height:20px;background:#3E3E42;"></div>
<div class="a" style="left:1484px;top:822px;width:101px;height:11px;background:#686868;"></div>
<svg class="a" style="left:1466px;top:818px" width="16" height="18" viewBox="1466 818 16 18"><path d="M1477.5 822 L1470.5 827.5 L1477.5 833 Z" fill="#999999"/></svg>
<svg class="a" style="left:1664px;top:818px" width="16" height="18" viewBox="1664 818 16 18"><path d="M1668.5 822 L1675.5 827.5 L1668.5 833 Z" fill="#999999"/></svg>
<div class="a" style="left:1682px;top:817px;width:21px;height:20px;background:#2A2A2C;"></div>
<svg class="a" style="left:1515px;top:197px" width="167" height="620" viewBox="1515 197 167 620"><path d="M1544.3 208.8 L1549.7 214 L1544.3 219.2 Z" fill="none" stroke="#E0E0E0" stroke-width="1.5" stroke-linejoin="miter"/><rect x="1593" y="211" width="5" height="5" fill="#3A7CC8"/><rect x="1598" y="211" width="5" height="5" fill="#7EBDF4"/><rect x="1603" y="211" width="5" height="5" fill="#2E2E7A"/><rect x="1608" y="211" width="5" height="5" fill="#D89848"/><rect x="1613" y="211" width="5" height="5" fill="#7EBDF4"/><rect x="1618" y="211" width="5" height="5" fill="#F0E4B0"/><rect x="1638" y="211" width="5" height="5" fill="#CCECC0"/><rect x="1643" y="211" width="5" height="5" fill="#8A3034"/><rect x="1668" y="211" width="5" height="5" fill="#7EBDF4"/><rect x="1673" y="211" width="5" height="5" fill="#3A7CC8"/><rect x="1678" y="211" width="4" height="5" fill="#E8B878"/><rect x="1593" y="216" width="5" height="5" fill="#3A7CC8"/><rect x="1598" y="216" width="5" height="5" fill="#7EBDF4"/><rect x="1603" y="216" width="5" height="5" fill="#C4ECF4"/><rect x="1608" y="216" width="5" height="5" fill="#D89848"/><rect x="1618" y="216" width="5" height="5" fill="#D89848"/><rect x="1658" y="216" width="5" height="5" fill="#F0E4B0"/><rect x="1663" y="216" width="5" height="5" fill="#8A3034"/><rect x="1668" y="216" width="5" height="5" fill="#7EBDF4"/><rect x="1673" y="216" width="5" height="5" fill="#C4ECF4"/><rect x="1678" y="216" width="4" height="5" fill="#E8B878"/><rect x="1573" y="211" width="5" height="5" fill="#7A4E7A"/><rect x="1578" y="211" width="5" height="5" fill="#BA7EC0"/><rect x="1583" y="211" width="5" height="5" fill="#7A4E7A"/><rect x="1578" y="216" width="5" height="5" fill="#7A4E7A"/><path d="M1544.3 231.8 L1549.7 237 L1544.3 242.2 Z" fill="none" stroke="#E0E0E0" stroke-width="1.5" stroke-linejoin="miter"/><rect x="1593" y="231" width="5" height="5" fill="#3A7CC8"/><rect x="1598" y="231" width="5" height="5" fill="#7EBDF4"/><rect x="1608" y="231" width="5" height="5" fill="#D89848"/><rect x="1593" y="236" width="5" height="5" fill="#3A7CC8"/><rect x="1598" y="236" width="5" height="5" fill="#7EBDF4"/><rect x="1603" y="236" width="5" height="5" fill="#2E2E7A"/><rect x="1608" y="236" width="5" height="5" fill="#D89848"/><rect x="1613" y="236" width="5" height="5" fill="#F0E4B0"/><rect x="1618" y="236" width="5" height="5" fill="#7EBDF4"/><rect x="1638" y="236" width="5" height="5" fill="#7EBDF4"/><rect x="1658" y="236" width="5" height="5" fill="#2E2E7A"/><rect x="1678" y="236" width="4" height="5" fill="#F2F2F2"/><rect x="1573" y="231" width="5" height="5" fill="#7A4E7A"/><rect x="1573" y="236" width="5" height="5" fill="#7A4E7A"/><rect x="1578" y="236" width="5" height="5" fill="#BA7EC0"/><rect x="1583" y="236" width="5" height="5" fill="#7A4E7A"/><path d="M1544.3 254.8 L1549.7 260 L1544.3 265.2 Z" fill="none" stroke="#E0E0E0" stroke-width="1.5" stroke-linejoin="miter"/><rect x="1593" y="256" width="5" height="5" fill="#F2F2F2"/><rect x="1598" y="256" width="5" height="5" fill="#7EBDF4"/><rect x="1603" y="256" width="5" height="5" fill="#F0E4B0"/><rect x="1608" y="256" width="5" height="5" fill="#D89848"/><rect x="1618" y="256" width="5" height="5" fill="#3A7CC8"/><rect x="1633" y="256" width="5" height="5" fill="#F2F2F2"/><rect x="1643" y="256" width="5" height="5" fill="#F2F2F2"/><rect x="1648" y="256" width="5" height="5" fill="#2E2E7A"/><rect x="1653" y="256" width="5" height="5" fill="#A8603C"/><rect x="1658" y="256" width="5" height="5" fill="#7EBDF4"/><rect x="1663" y="256" width="5" height="5" fill="#C4ECF4"/><rect x="1673" y="256" width="5" height="5" fill="#F2F2F2"/><rect x="1593" y="261" width="5" height="5" fill="#3A7CC8"/><rect x="1598" y="261" width="5" height="5" fill="#7EBDF4"/><rect x="1603" y="261" width="5" height="5" fill="#3A7CC8"/><rect x="1608" y="261" width="5" height="5" fill="#D89848"/><rect x="1613" y="261" width="5" height="5" fill="#7EBDF4"/><rect x="1648" y="261" width="5" height="5" fill="#F0E4B0"/><rect x="1653" y="261" width="5" height="5" fill="#F0E4B0"/><rect x="1678" y="261" width="4" height="5" fill="#8A3034"/><rect x="1568" y="256" width="5" height="5" fill="#7A4E7A"/><rect x="1573" y="256" width="5" height="5" fill="#BA7EC0"/><rect x="1578" y="256" width="5" height="5" fill="#7A4E7A"/><rect x="1578" y="261" width="5" height="5" fill="#7A4E7A"/><path d="M1544.3 277.8 L1549.7 283 L1544.3 288.2 Z" fill="none" stroke="#E0E0E0" stroke-width="1.5" stroke-linejoin="miter"/><rect x="1598" y="276" width="5" height="5" fill="#7EBDF4"/><rect x="1608" y="276" width="5" height="5" fill="#D89848"/><rect x="1593" y="281" width="5" height="5" fill="#3A7CC8"/><rect x="1598" y="281" width="5" height="5" fill="#7EBDF4"/><rect x="1603" y="281" width="5" height="5" fill="#3A7CC8"/><rect x="1608" y="281" width="5" height="5" fill="#D89848"/><rect x="1613" y="281" width="5" height="5" fill="#7EBDF4"/><rect x="1618" y="281" width="5" height="5" fill="#CCECC0"/><rect x="1638" y="281" width="5" height="5" fill="#2E2E7A"/><rect x="1658" y="281" width="5" height="5" fill="#E8B878"/><rect x="1663" y="281" width="5" height="5" fill="#C4ECF4"/><rect x="1673" y="281" width="5" height="5" fill="#3A7CC8"/><rect x="1593" y="286" width="5" height="5" fill="#2E2E7A"/><rect x="1598" y="286" width="5" height="5" fill="#7EBDF4"/><rect x="1603" y="286" width="5" height="5" fill="#D89848"/><rect x="1608" y="286" width="5" height="5" fill="#D89848"/><rect x="1618" y="286" width="5" height="5" fill="#C4ECF4"/><rect x="1633" y="286" width="5" height="5" fill="#F2F2F2"/><rect x="1638" y="286" width="5" height="5" fill="#2E2E7A"/><rect x="1648" y="286" width="5" height="5" fill="#F2F2F2"/><rect x="1653" y="286" width="5" height="5" fill="#A8603C"/><rect x="1658" y="286" width="5" height="5" fill="#F2F2F2"/><rect x="1663" y="286" width="5" height="5" fill="#E8B878"/><rect x="1673" y="286" width="5" height="5" fill="#7EBDF4"/><rect x="1678" y="286" width="4" height="5" fill="#E8B878"/><rect x="1573" y="276" width="5" height="5" fill="#7A4E7A"/><rect x="1573" y="281" width="5" height="5" fill="#7A4E7A"/><rect x="1578" y="281" width="5" height="5" fill="#BA7EC0"/><rect x="1583" y="281" width="5" height="5" fill="#7A4E7A"/><path d="M1544.3 300.8 L1549.7 306 L1544.3 311.2 Z" fill="none" stroke="#E0E0E0" stroke-width="1.5" stroke-linejoin="miter"/><rect x="1593" y="301" width="5" height="5" fill="#3A7CC8"/><rect x="1598" y="301" width="5" height="5" fill="#7EBDF4"/><rect x="1608" y="301" width="5" height="5" fill="#D89848"/><rect x="1593" y="306" width="5" height="5" fill="#3A7CC8"/><rect x="1598" y="306" width="5" height="5" fill="#7EBDF4"/><rect x="1603" y="306" width="5" height="5" fill="#2E2E7A"/><rect x="1608" y="306" width="5" height="5" fill="#D89848"/><rect x="1613" y="306" width="5" height="5" fill="#F0E4B0"/><rect x="1643" y="306" width="5" height="5" fill="#3A7CC8"/><rect x="1653" y="306" width="5" height="5" fill="#3A7CC8"/><rect x="1668" y="306" width="5" height="5" fill="#A8603C"/><rect x="1678" y="306" width="4" height="5" fill="#CCECC0"/><rect x="1628" y="311" width="5" height="5" fill="#C4ECF4"/><rect x="1633" y="311" width="5" height="5" fill="#C4ECF4"/><rect x="1568" y="301" width="5" height="5" fill="#7A4E7A"/><rect x="1573" y="301" width="5" height="5" fill="#BA7EC0"/><rect x="1578" y="301" width="5" height="5" fill="#7A4E7A"/><rect x="1573" y="306" width="5" height="5" fill="#7A4E7A"/><rect x="1578" y="306" width="5" height="5" fill="#BA7EC0"/><rect x="1583" y="306" width="5" height="5" fill="#7A4E7A"/><path d="M1544.3 323.8 L1549.7 329 L1544.3 334.2 Z" fill="none" stroke="#E0E0E0" stroke-width="1.5" stroke-linejoin="miter"/><rect x="1593" y="326" width="5" height="5" fill="#3A7CC8"/><rect x="1598" y="326" width="5" height="5" fill="#7EBDF4"/><rect x="1603" y="326" width="5" height="5" fill="#C4ECF4"/><rect x="1608" y="326" width="5" height="5" fill="#D89848"/><rect x="1618" y="326" width="5" height="5" fill="#F0E4B0"/><rect x="1633" y="326" width="5" height="5" fill="#3A7CC8"/><rect x="1638" y="326" width="5" height="5" fill="#8A3034"/><rect x="1643" y="326" width="5" height="5" fill="#3A7CC8"/><rect x="1648" y="326" width="5" height="5" fill="#D89848"/><rect x="1653" y="326" width="5" height="5" fill="#A8603C"/><rect x="1663" y="326" width="5" height="5" fill="#F0E4B0"/><rect x="1673" y="326" width="5" height="5" fill="#2E2E7A"/><rect x="1593" y="331" width="5" height="5" fill="#3A7CC8"/><rect x="1598" y="331" width="5" height="5" fill="#7EBDF4"/><rect x="1603" y="331" width="5" height="5" fill="#C4ECF4"/><rect x="1608" y="331" width="5" height="5" fill="#D89848"/><rect x="1618" y="331" width="5" height="5" fill="#D89848"/><rect x="1633" y="331" width="5" height="5" fill="#7EBDF4"/><rect x="1638" y="331" width="5" height="5" fill="#8A3034"/><rect x="1643" y="331" width="5" height="5" fill="#C4ECF4"/><rect x="1648" y="331" width="5" height="5" fill="#F0E4B0"/><rect x="1658" y="331" width="5" height="5" fill="#3A7CC8"/><rect x="1663" y="331" width="5" height="5" fill="#F0E4B0"/><rect x="1673" y="331" width="5" height="5" fill="#2E2E7A"/><rect x="1678" y="331" width="4" height="5" fill="#F2F2F2"/><rect x="1568" y="326" width="5" height="5" fill="#7A4E7A"/><rect x="1573" y="326" width="5" height="5" fill="#BA7EC0"/><rect x="1578" y="326" width="5" height="5" fill="#7A4E7A"/><rect x="1578" y="331" width="5" height="5" fill="#7A4E7A"/><path d="M1544.3 345.8 L1549.7 351 L1544.3 356.2 Z" fill="none" stroke="#E0E0E0" stroke-width="1.5" stroke-linejoin="miter"/><rect x="1593" y="346" width="5" height="5" fill="#3A7CC8"/><rect x="1598" y="346" width="5" height="5" fill="#7EBDF4"/><rect x="1608" y="346" width="5" height="5" fill="#D89848"/><rect x="1593" y="351" width="5" height="5" fill="#3A7CC8"/><rect x="1598" y="351" width="5" height="5" fill="#7EBDF4"/><rect x="1603" y="351" width="5" height="5" fill="#2E2E7A"/><rect x="1608" y="351" width="5" height="5" fill="#D89848"/><rect x="1613" y="351" width="5" height="5" fill="#F0E4B0"/><rect x="1618" y="351" width="5" height="5" fill="#7EBDF4"/><rect x="1643" y="351" width="5" height="5" fill="#A8603C"/><rect x="1648" y="351" width="5" height="5" fill="#F2F2F2"/><rect x="1653" y="351" width="5" height="5" fill="#F2F2F2"/><rect x="1658" y="351" width="5" height="5" fill="#F2F2F2"/><rect x="1673" y="351" width="5" height="5" fill="#F0E4B0"/><rect x="1573" y="346" width="5" height="5" fill="#7A4E7A"/><rect x="1573" y="351" width="5" height="5" fill="#7A4E7A"/><rect x="1578" y="351" width="5" height="5" fill="#BA7EC0"/><rect x="1583" y="351" width="5" height="5" fill="#7A4E7A"/><path d="M1544.3 368.8 L1549.7 374 L1544.3 379.2 Z" fill="none" stroke="#E0E0E0" stroke-width="1.5" stroke-linejoin="miter"/><rect x="1593" y="371" width="5" height="5" fill="#F2F2F2"/><rect x="1598" y="371" width="5" height="5" fill="#7EBDF4"/><rect x="1603" y="371" width="5" height="5" fill="#F0E4B0"/><rect x="1608" y="371" width="5" height="5" fill="#D89848"/><rect x="1618" y="371" width="5" height="5" fill="#3A7CC8"/><rect x="1633" y="371" width="5" height="5" fill="#E8B878"/><rect x="1638" y="371" width="5" height="5" fill="#2E2E7A"/><rect x="1643" y="371" width="5" height="5" fill="#3A7CC8"/><rect x="1658" y="371" width="5" height="5" fill="#A8603C"/><rect x="1663" y="371" width="5" height="5" fill="#F2F2F2"/><rect x="1673" y="371" width="5" height="5" fill="#F2F2F2"/><rect x="1593" y="376" width="5" height="5" fill="#3A7CC8"/><rect x="1598" y="376" width="5" height="5" fill="#7EBDF4"/><rect x="1603" y="376" width="5" height="5" fill="#3A7CC8"/><rect x="1608" y="376" width="5" height="5" fill="#D89848"/><rect x="1613" y="376" width="5" height="5" fill="#7EBDF4"/><rect x="1638" y="376" width="5" height="5" fill="#D89848"/><rect x="1643" y="376" width="5" height="5" fill="#D89848"/><rect x="1653" y="376" width="5" height="5" fill="#CCECC0"/><rect x="1678" y="376" width="4" height="5" fill="#8A3034"/><rect x="1568" y="371" width="5" height="5" fill="#7A4E7A"/><rect x="1573" y="371" width="5" height="5" fill="#BA7EC0"/><rect x="1578" y="371" width="5" height="5" fill="#7A4E7A"/><rect x="1578" y="376" width="5" height="5" fill="#7A4E7A"/><path d="M1544.3 391.8 L1549.7 397 L1544.3 402.2 Z" fill="none" stroke="#E0E0E0" stroke-width="1.5" stroke-linejoin="miter"/><rect x="1598" y="391" width="5" height="5" fill="#7EBDF4"/><rect x="1608" y="391" width="5" height="5" fill="#D89848"/><rect x="1593" y="396" width="5" height="5" fill="#3A7CC8"/><rect x="1598" y="396" width="5" height="5" fill="#7EBDF4"/><rect x="1603" y="396" width="5" height="5" fill="#3A7CC8"/><rect x="1608" y="396" width="5" height="5" fill="#D89848"/><rect x="1613" y="396" width="5" height="5" fill="#7EBDF4"/><rect x="1618" y="396" width="5" height="5" fill="#CCECC0"/><rect x="1638" y="396" width="5" height="5" fill="#F0E4B0"/><rect x="1668" y="396" width="5" height="5" fill="#7EBDF4"/><rect x="1673" y="396" width="5" height="5" fill="#3A7CC8"/><rect x="1678" y="396" width="4" height="5" fill="#E8B878"/><rect x="1598" y="401" width="5" height="5" fill="#7EBDF4"/><rect x="1603" y="401" width="5" height="5" fill="#E8B878"/><rect x="1608" y="401" width="5" height="5" fill="#D89848"/><rect x="1618" y="401" width="5" height="5" fill="#C4ECF4"/><rect x="1633" y="401" width="5" height="5" fill="#F0E4B0"/><rect x="1638" y="401" width="5" height="5" fill="#F0E4B0"/><rect x="1648" y="401" width="5" height="5" fill="#F2F2F2"/><rect x="1653" y="401" width="5" height="5" fill="#F2F2F2"/><rect x="1658" y="401" width="5" height="5" fill="#F2F2F2"/><rect x="1663" y="401" width="5" height="5" fill="#7EBDF4"/><rect x="1668" y="401" width="5" height="5" fill="#E8B878"/><rect x="1673" y="401" width="5" height="5" fill="#E8B878"/><rect x="1678" y="401" width="4" height="5" fill="#F2F2F2"/><rect x="1573" y="391" width="5" height="5" fill="#7A4E7A"/><rect x="1573" y="396" width="5" height="5" fill="#7A4E7A"/><rect x="1578" y="396" width="5" height="5" fill="#BA7EC0"/><rect x="1583" y="396" width="5" height="5" fill="#7A4E7A"/><path d="M1544.3 414.8 L1549.7 420 L1544.3 425.2 Z" fill="none" stroke="#E0E0E0" stroke-width="1.5" stroke-linejoin="miter"/><rect x="1593" y="416" width="5" height="5" fill="#3A7CC8"/><rect x="1598" y="416" width="5" height="5" fill="#7EBDF4"/><rect x="1608" y="416" width="5" height="5" fill="#D89848"/><rect x="1593" y="421" width="5" height="5" fill="#3A7CC8"/><rect x="1598" y="421" width="5" height="5" fill="#7EBDF4"/><rect x="1603" y="421" width="5" height="5" fill="#2E2E7A"/><rect x="1608" y="421" width="5" height="5" fill="#D89848"/><rect x="1613" y="421" width="5" height="5" fill="#F0E4B0"/><rect x="1633" y="421" width="5" height="5" fill="#7EBDF4"/><rect x="1638" y="421" width="5" height="5" fill="#D89848"/><rect x="1643" y="421" width="5" height="5" fill="#8A3034"/><rect x="1663" y="421" width="5" height="5" fill="#8A3034"/><rect x="1678" y="421" width="4" height="5" fill="#A8603C"/><rect x="1623" y="426" width="5" height="5" fill="#C4ECF4"/><rect x="1628" y="426" width="5" height="5" fill="#C4ECF4"/><rect x="1568" y="416" width="5" height="5" fill="#7A4E7A"/><rect x="1573" y="416" width="5" height="5" fill="#BA7EC0"/><rect x="1578" y="416" width="5" height="5" fill="#7A4E7A"/><rect x="1573" y="421" width="5" height="5" fill="#7A4E7A"/><rect x="1578" y="421" width="5" height="5" fill="#BA7EC0"/><rect x="1583" y="421" width="5" height="5" fill="#7A4E7A"/><rect x="1588" y="441" width="5" height="5" fill="#C4ECF4"/><rect x="1623" y="441" width="5" height="5" fill="#3A7CC8"/><rect x="1628" y="441" width="5" height="5" fill="#D89848"/><rect x="1633" y="441" width="5" height="5" fill="#E8B878"/><rect x="1663" y="441" width="5" height="5" fill="#F0E4B0"/><rect x="1673" y="441" width="5" height="5" fill="#2E2E7A"/><rect x="1573" y="446" width="5" height="5" fill="#E8B878"/><rect x="1578" y="446" width="5" height="5" fill="#A8603C"/><rect x="1588" y="446" width="5" height="5" fill="#8A3034"/><rect x="1598" y="446" width="5" height="5" fill="#A8603C"/><rect x="1613" y="446" width="5" height="5" fill="#3A7CC8"/><rect x="1618" y="446" width="5" height="5" fill="#7EBDF4"/><rect x="1623" y="446" width="5" height="5" fill="#A8603C"/><rect x="1628" y="446" width="5" height="5" fill="#3A7CC8"/><rect x="1633" y="446" width="5" height="5" fill="#E8B878"/><rect x="1638" y="446" width="5" height="5" fill="#D89848"/><rect x="1653" y="446" width="5" height="5" fill="#E8B878"/><rect x="1663" y="446" width="5" height="5" fill="#F0E4B0"/><rect x="1673" y="446" width="5" height="5" fill="#2E2E7A"/><path d="M1547 443 H1556 M1551.5 439 V447.5" stroke="#BA7EC0" stroke-width="3"/><path d="M1556 445 L1558.5 442.5 H1563.5 V448 H1558.5 Z" fill="#BA7EC0"/><path d="M1553 448 L1557 444.5 V452 Z" fill="#E03A2A"/><rect x="1558" y="445" width="5" height="6" fill="#101010"/><rect x="1588" y="466" width="5" height="5" fill="#F2F2F2"/><rect x="1593" y="466" width="5" height="5" fill="#E8B878"/><rect x="1613" y="466" width="5" height="5" fill="#F2F2F2"/><rect x="1618" y="466" width="5" height="5" fill="#7EBDF4"/><rect x="1628" y="466" width="5" height="5" fill="#F0E4B0"/><path d="M1547 466 H1556 M1551.5 462 V470.5" stroke="#BA7EC0" stroke-width="3"/><path d="M1556 468 L1558.5 465.5 H1563.5 V471 H1558.5 Z" fill="#BA7EC0"/><rect x="1573" y="486" width="5" height="5" fill="#C4ECF4"/><rect x="1578" y="486" width="5" height="5" fill="#C4ECF4"/><rect x="1588" y="486" width="5" height="5" fill="#F2F2F2"/><rect x="1598" y="486" width="5" height="5" fill="#7EBDF4"/><rect x="1603" y="486" width="5" height="5" fill="#A8603C"/><rect x="1608" y="486" width="5" height="5" fill="#8A3034"/><rect x="1618" y="486" width="5" height="5" fill="#F0E4B0"/><rect x="1623" y="486" width="5" height="5" fill="#F0E4B0"/><rect x="1583" y="491" width="5" height="5" fill="#3A7CC8"/><rect x="1593" y="491" width="5" height="5" fill="#CCECC0"/><rect x="1598" y="491" width="5" height="5" fill="#7EBDF4"/><rect x="1603" y="491" width="5" height="5" fill="#A8603C"/><rect x="1608" y="491" width="5" height="5" fill="#8A3034"/><rect x="1613" y="491" width="5" height="5" fill="#3A7CC8"/><path d="M1548 482 H1556.5 L1563 488 V500 H1548 Z" fill="#F4F4F4"/><rect x="1556" y="496" width="6" height="4" fill="#D8D8D8"/><rect x="1603" y="506" width="5" height="5" fill="#7EBDF4"/><rect x="1638" y="506" width="5" height="5" fill="#2E2E7A"/><rect x="1648" y="506" width="5" height="5" fill="#7A4E7A"/><rect x="1663" y="506" width="5" height="5" fill="#F2F2F2"/><rect x="1673" y="506" width="5" height="5" fill="#3A7CC8"/><rect x="1678" y="506" width="4" height="5" fill="#F2F2F2"/><rect x="1578" y="511" width="5" height="5" fill="#A8603C"/><rect x="1603" y="511" width="5" height="5" fill="#7EBDF4"/><rect x="1608" y="511" width="5" height="5" fill="#3A7CC8"/><rect x="1613" y="511" width="5" height="5" fill="#A8603C"/><rect x="1618" y="511" width="5" height="5" fill="#8A3034"/><rect x="1638" y="511" width="5" height="5" fill="#CCECC0"/><rect x="1643" y="511" width="5" height="5" fill="#8A3034"/><rect x="1653" y="511" width="5" height="5" fill="#3A7CC8"/><rect x="1658" y="511" width="5" height="5" fill="#F0E4B0"/><rect x="1668" y="511" width="5" height="5" fill="#F2F2F2"/><rect x="1573" y="516" width="5" height="5" fill="#7EBDF4"/><rect x="1588" y="516" width="5" height="5" fill="#F2F2F2"/><rect x="1598" y="516" width="5" height="5" fill="#F2F2F2"/><rect x="1603" y="516" width="5" height="5" fill="#7EBDF4"/><rect x="1608" y="516" width="5" height="5" fill="#E8B878"/><rect x="1613" y="516" width="5" height="5" fill="#C4ECF4"/><rect x="1618" y="516" width="5" height="5" fill="#8A3034"/><rect x="1623" y="516" width="5" height="5" fill="#F2F2F2"/><rect x="1648" y="516" width="5" height="5" fill="#E8B878"/><rect x="1663" y="516" width="5" height="5" fill="#F2F2F2"/><rect x="1668" y="516" width="5" height="5" fill="#C4ECF4"/><rect x="1673" y="516" width="5" height="5" fill="#7EBDF4"/><rect x="1678" y="516" width="4" height="5" fill="#F2F2F2"/><path d="M1547 512 H1556 M1551.5 508 V516.5" stroke="#BA7EC0" stroke-width="3"/><path d="M1556 514 L1558.5 511.5 H1563.5 V517 H1558.5 Z" fill="#BA7EC0"/><rect x="1638" y="531" width="5" height="5" fill="#8A3034"/><rect x="1643" y="531" width="5" height="5" fill="#7EBDF4"/><rect x="1653" y="531" width="5" height="5" fill="#E8B878"/><rect x="1658" y="531" width="5" height="5" fill="#3A7CC8"/><rect x="1578" y="536" width="5" height="5" fill="#A8603C"/><rect x="1603" y="536" width="5" height="5" fill="#3A7CC8"/><rect x="1613" y="536" width="5" height="5" fill="#3A7CC8"/><rect x="1638" y="536" width="5" height="5" fill="#3A7CC8"/><rect x="1648" y="536" width="5" height="5" fill="#7EBDF4"/><rect x="1653" y="536" width="5" height="5" fill="#C4ECF4"/><rect x="1658" y="536" width="5" height="5" fill="#C4ECF4"/><rect x="1578" y="541" width="5" height="5" fill="#2E2E7A"/><rect x="1583" y="541" width="5" height="5" fill="#F2F2F2"/><rect x="1628" y="541" width="5" height="5" fill="#C4ECF4"/><rect x="1633" y="541" width="5" height="5" fill="#C4ECF4"/><path d="M1547 535 H1556 M1551.5 531 V539.5" stroke="#BA7EC0" stroke-width="3"/><rect x="1557" y="533" width="6" height="8" fill="#7A5A7A"/><rect x="1557" y="529" width="6" height="4" fill="#505058"/><rect x="1573" y="556" width="5" height="5" fill="#D89848"/><rect x="1598" y="556" width="5" height="5" fill="#7EBDF4"/><rect x="1603" y="556" width="5" height="5" fill="#A09040"/><rect x="1608" y="556" width="5" height="5" fill="#2E2E7A"/><rect x="1613" y="556" width="5" height="5" fill="#3A7CC8"/><rect x="1618" y="556" width="5" height="5" fill="#F0E4B0"/><rect x="1623" y="556" width="5" height="5" fill="#D89848"/><rect x="1628" y="556" width="5" height="5" fill="#8A3034"/><rect x="1643" y="556" width="5" height="5" fill="#E8B878"/><rect x="1648" y="556" width="5" height="5" fill="#E8B878"/><rect x="1658" y="556" width="5" height="5" fill="#7EBDF4"/><rect x="1663" y="556" width="5" height="5" fill="#F0E4B0"/><rect x="1678" y="556" width="4" height="5" fill="#F0E4B0"/><rect x="1573" y="561" width="5" height="5" fill="#D89848"/><rect x="1598" y="561" width="5" height="5" fill="#7EBDF4"/><rect x="1603" y="561" width="5" height="5" fill="#A09040"/><rect x="1608" y="561" width="5" height="5" fill="#2E2E7A"/><rect x="1613" y="561" width="5" height="5" fill="#C4ECF4"/><rect x="1618" y="561" width="5" height="5" fill="#E8B878"/><rect x="1623" y="561" width="5" height="5" fill="#D89848"/><rect x="1628" y="561" width="5" height="5" fill="#8A3034"/><rect x="1653" y="561" width="5" height="5" fill="#CCECC0"/><rect x="1663" y="561" width="5" height="5" fill="#2E2E7A"/><rect x="1673" y="561" width="5" height="5" fill="#CCECC0"/><path d="M1547 558 H1556 M1551.5 554 V562.5" stroke="#BA7EC0" stroke-width="3"/><rect x="1557" y="556" width="6" height="8" fill="#7A5A7A"/><rect x="1557" y="552" width="6" height="4" fill="#505058"/><rect x="1578" y="581" width="5" height="5" fill="#A8603C"/><rect x="1588" y="581" width="5" height="5" fill="#D89848"/><rect x="1593" y="581" width="5" height="5" fill="#A8603C"/><rect x="1603" y="581" width="5" height="5" fill="#F2F2F2"/><rect x="1608" y="581" width="5" height="5" fill="#D89848"/><rect x="1613" y="581" width="5" height="5" fill="#D89848"/><rect x="1628" y="581" width="5" height="5" fill="#3A7CC8"/><rect x="1643" y="581" width="5" height="5" fill="#A8603C"/><rect x="1653" y="581" width="5" height="5" fill="#F2F2F2"/><rect x="1678" y="581" width="4" height="5" fill="#F2F2F2"/><path d="M1547 581 H1556 M1551.5 577 V585.5" stroke="#BA7EC0" stroke-width="3"/><path d="M1556 583 L1558.5 580.5 H1563.5 V586 H1558.5 Z" fill="#BA7EC0"/><rect x="1573" y="601" width="5" height="5" fill="#3A7CC8"/><rect x="1588" y="601" width="5" height="5" fill="#F2F2F2"/><rect x="1593" y="601" width="5" height="5" fill="#7EBDF4"/><rect x="1603" y="601" width="5" height="5" fill="#E8B878"/><rect x="1608" y="601" width="5" height="5" fill="#A8603C"/><rect x="1633" y="601" width="5" height="5" fill="#F2F2F2"/><rect x="1638" y="601" width="5" height="5" fill="#F2F2F2"/><rect x="1648" y="601" width="5" height="5" fill="#F0E4B0"/><rect x="1653" y="601" width="5" height="5" fill="#F0E4B0"/><rect x="1668" y="601" width="5" height="5" fill="#F2F2F2"/><rect x="1673" y="601" width="5" height="5" fill="#2E2E7A"/><rect x="1678" y="601" width="4" height="5" fill="#F2F2F2"/><rect x="1578" y="606" width="5" height="5" fill="#8A3034"/><rect x="1588" y="606" width="5" height="5" fill="#2E2E7A"/><rect x="1593" y="606" width="5" height="5" fill="#D89848"/><rect x="1598" y="606" width="5" height="5" fill="#3A7CC8"/><rect x="1603" y="606" width="5" height="5" fill="#7EBDF4"/><rect x="1608" y="606" width="5" height="5" fill="#E8B878"/><rect x="1613" y="606" width="5" height="5" fill="#A8603C"/><rect x="1628" y="606" width="5" height="5" fill="#3A7CC8"/><rect x="1643" y="606" width="5" height="5" fill="#8A3034"/><rect x="1673" y="606" width="5" height="5" fill="#CCECC0"/><path d="M1547 604 H1556 M1551.5 600 V608.5" stroke="#BA7EC0" stroke-width="3"/><path d="M1556 606 L1558.5 603.5 H1563.5 V609 H1558.5 Z" fill="#BA7EC0"/><rect x="1618" y="621" width="5" height="5" fill="#F2F2F2"/><rect x="1653" y="621" width="5" height="5" fill="#F2F2F2"/><rect x="1578" y="626" width="5" height="5" fill="#A8603C"/><rect x="1593" y="626" width="5" height="5" fill="#D89848"/><rect x="1603" y="626" width="5" height="5" fill="#3A7CC8"/><rect x="1608" y="626" width="5" height="5" fill="#D89848"/><rect x="1613" y="626" width="5" height="5" fill="#8A3034"/><rect x="1633" y="626" width="5" height="5" fill="#7EBDF4"/><rect x="1638" y="626" width="5" height="5" fill="#3A7CC8"/><rect x="1643" y="626" width="5" height="5" fill="#E8B878"/><rect x="1648" y="626" width="5" height="5" fill="#3A7CC8"/><rect x="1658" y="626" width="5" height="5" fill="#C4ECF4"/><rect x="1663" y="626" width="5" height="5" fill="#3A7CC8"/><rect x="1668" y="626" width="5" height="5" fill="#E8B878"/><rect x="1673" y="626" width="5" height="5" fill="#A8603C"/><rect x="1573" y="631" width="5" height="5" fill="#7EBDF4"/><rect x="1588" y="631" width="5" height="5" fill="#F2F2F2"/><rect x="1593" y="631" width="5" height="5" fill="#7EBDF4"/><rect x="1603" y="631" width="5" height="5" fill="#3A7CC8"/><rect x="1608" y="631" width="5" height="5" fill="#D89848"/><rect x="1613" y="631" width="5" height="5" fill="#A8603C"/><rect x="1618" y="631" width="5" height="5" fill="#F2F2F2"/><rect x="1633" y="631" width="5" height="5" fill="#7EBDF4"/><rect x="1638" y="631" width="5" height="5" fill="#E8B878"/><rect x="1643" y="631" width="5" height="5" fill="#7EBDF4"/><rect x="1653" y="631" width="5" height="5" fill="#F2F2F2"/><rect x="1663" y="631" width="5" height="5" fill="#E8B878"/><rect x="1668" y="631" width="5" height="5" fill="#D89848"/><rect x="1673" y="631" width="5" height="5" fill="#7EBDF4"/><rect x="1678" y="631" width="4" height="5" fill="#F2F2F2"/><path d="M1547 627 H1556 M1551.5 623 V631.5" stroke="#BA7EC0" stroke-width="3"/><path d="M1556 629 L1558.5 626.5 H1563.5 V632 H1558.5 Z" fill="#BA7EC0"/><rect x="1578" y="651" width="5" height="5" fill="#A8603C"/><rect x="1588" y="651" width="5" height="5" fill="#C4ECF4"/><rect x="1593" y="651" width="5" height="5" fill="#8A3034"/><rect x="1598" y="651" width="5" height="5" fill="#2E2E7A"/><rect x="1603" y="651" width="5" height="5" fill="#3A7CC8"/><rect x="1608" y="651" width="5" height="5" fill="#D89848"/><rect x="1613" y="651" width="5" height="5" fill="#A8603C"/><rect x="1633" y="651" width="5" height="5" fill="#7EBDF4"/><rect x="1638" y="651" width="5" height="5" fill="#2E2E7A"/><rect x="1643" y="651" width="5" height="5" fill="#8A3034"/><rect x="1648" y="651" width="5" height="5" fill="#3A7CC8"/><rect x="1658" y="651" width="5" height="5" fill="#F0E4B0"/><rect x="1663" y="651" width="5" height="5" fill="#2E2E7A"/><rect x="1668" y="651" width="5" height="5" fill="#D89848"/><rect x="1673" y="651" width="5" height="5" fill="#A8603C"/><rect x="1578" y="656" width="5" height="5" fill="#2E2E7A"/><rect x="1583" y="656" width="5" height="5" fill="#F2F2F2"/><rect x="1623" y="656" width="5" height="5" fill="#F2F2F2"/><rect x="1628" y="656" width="5" height="5" fill="#D89848"/><rect x="1633" y="656" width="5" height="5" fill="#7EBDF4"/><path d="M1547 650 H1556 M1551.5 646 V654.5" stroke="#BA7EC0" stroke-width="3"/><path d="M1556 652 L1558.5 649.5 H1563.5 V655 H1558.5 Z" fill="#BA7EC0"/><rect x="1573" y="671" width="5" height="5" fill="#D89848"/><rect x="1593" y="671" width="5" height="5" fill="#F0E4B0"/><rect x="1603" y="671" width="5" height="5" fill="#7EBDF4"/><rect x="1608" y="671" width="5" height="5" fill="#F0E4B0"/><rect x="1613" y="671" width="5" height="5" fill="#8A3034"/><rect x="1633" y="671" width="5" height="5" fill="#7EBDF4"/><rect x="1638" y="671" width="5" height="5" fill="#8A3034"/><rect x="1648" y="671" width="5" height="5" fill="#3A7CC8"/><rect x="1653" y="671" width="5" height="5" fill="#7EBDF4"/><rect x="1663" y="671" width="5" height="5" fill="#7EBDF4"/><rect x="1668" y="671" width="5" height="5" fill="#3A7CC8"/><rect x="1673" y="671" width="5" height="5" fill="#F0E4B0"/><rect x="1573" y="676" width="5" height="5" fill="#D89848"/><rect x="1593" y="676" width="5" height="5" fill="#F0E4B0"/><rect x="1598" y="676" width="5" height="5" fill="#3A7CC8"/><rect x="1603" y="676" width="5" height="5" fill="#C4ECF4"/><rect x="1608" y="676" width="5" height="5" fill="#E8B878"/><rect x="1613" y="676" width="5" height="5" fill="#A8603C"/><rect x="1633" y="676" width="5" height="5" fill="#3A7CC8"/><rect x="1638" y="676" width="5" height="5" fill="#7EBDF4"/><rect x="1648" y="676" width="5" height="5" fill="#2E2E7A"/><rect x="1653" y="676" width="5" height="5" fill="#3A7CC8"/><rect x="1663" y="676" width="5" height="5" fill="#7EBDF4"/><rect x="1668" y="676" width="5" height="5" fill="#7EBDF4"/><rect x="1673" y="676" width="5" height="5" fill="#CCECC0"/><path d="M1547 673 H1556 M1551.5 669 V677.5" stroke="#BA7EC0" stroke-width="3"/><rect x="1557" y="671" width="6" height="8" fill="#7A5A7A"/><rect x="1557" y="667" width="6" height="4" fill="#505058"/><rect x="1578" y="696" width="5" height="5" fill="#A8603C"/><rect x="1588" y="696" width="5" height="5" fill="#D89848"/><rect x="1593" y="696" width="5" height="5" fill="#A8603C"/><rect x="1603" y="696" width="5" height="5" fill="#F2F2F2"/><rect x="1608" y="696" width="5" height="5" fill="#D89848"/><rect x="1613" y="696" width="5" height="5" fill="#D89848"/><rect x="1633" y="696" width="5" height="5" fill="#3A7CC8"/><rect x="1638" y="696" width="5" height="5" fill="#F2F2F2"/><rect x="1643" y="696" width="5" height="5" fill="#8A3034"/><rect x="1648" y="696" width="5" height="5" fill="#E8B878"/><rect x="1668" y="696" width="5" height="5" fill="#F0E4B0"/><rect x="1678" y="696" width="4" height="5" fill="#F2F2F2"/><rect x="1648" y="701" width="5" height="5" fill="#E8B878"/><path d="M1547 696 H1556 M1551.5 692 V700.5" stroke="#BA7EC0" stroke-width="3"/><path d="M1556 698 L1558.5 695.5 H1563.5 V701 H1558.5 Z" fill="#BA7EC0"/><rect x="1573" y="716" width="5" height="5" fill="#7EBDF4"/><rect x="1588" y="716" width="5" height="5" fill="#F2F2F2"/><rect x="1593" y="716" width="5" height="5" fill="#7EBDF4"/><rect x="1603" y="716" width="5" height="5" fill="#F0E4B0"/><rect x="1608" y="716" width="5" height="5" fill="#E8B878"/><rect x="1633" y="716" width="5" height="5" fill="#8A3034"/><rect x="1638" y="716" width="5" height="5" fill="#F2F2F2"/><rect x="1643" y="716" width="5" height="5" fill="#F2F2F2"/><rect x="1648" y="716" width="5" height="5" fill="#7EBDF4"/><rect x="1653" y="716" width="5" height="5" fill="#F2F2F2"/><rect x="1658" y="716" width="5" height="5" fill="#F2F2F2"/><rect x="1663" y="716" width="5" height="5" fill="#7EBDF4"/><rect x="1668" y="716" width="5" height="5" fill="#7EBDF4"/><rect x="1578" y="721" width="5" height="5" fill="#8A3034"/><rect x="1588" y="721" width="5" height="5" fill="#2E2E7A"/><rect x="1593" y="721" width="5" height="5" fill="#D89848"/><rect x="1598" y="721" width="5" height="5" fill="#3A7CC8"/><rect x="1603" y="721" width="5" height="5" fill="#7EBDF4"/><rect x="1608" y="721" width="5" height="5" fill="#E8B878"/><rect x="1613" y="721" width="5" height="5" fill="#A8603C"/><rect x="1633" y="721" width="5" height="5" fill="#3A7CC8"/><rect x="1643" y="721" width="5" height="5" fill="#F0E4B0"/><rect x="1648" y="721" width="5" height="5" fill="#A8603C"/><rect x="1658" y="721" width="5" height="5" fill="#3A7CC8"/><rect x="1663" y="721" width="5" height="5" fill="#7EBDF4"/><rect x="1668" y="721" width="5" height="5" fill="#A8603C"/><path d="M1547 719 H1556 M1551.5 715 V723.5" stroke="#BA7EC0" stroke-width="3"/><rect x="1557" y="717" width="6" height="8" fill="#7A5A7A"/><rect x="1557" y="713" width="6" height="4" fill="#505058"/><rect x="1618" y="736" width="5" height="5" fill="#F2F2F2"/><rect x="1663" y="736" width="5" height="5" fill="#7EBDF4"/><rect x="1578" y="741" width="5" height="5" fill="#A8603C"/><rect x="1593" y="741" width="5" height="5" fill="#D89848"/><rect x="1603" y="741" width="5" height="5" fill="#3A7CC8"/><rect x="1608" y="741" width="5" height="5" fill="#D89848"/><rect x="1613" y="741" width="5" height="5" fill="#8A3034"/><rect x="1618" y="741" width="5" height="5" fill="#2E2E7A"/><rect x="1643" y="741" width="5" height="5" fill="#E8B878"/><rect x="1648" y="741" width="5" height="5" fill="#D89848"/><rect x="1653" y="741" width="5" height="5" fill="#D89848"/><rect x="1658" y="741" width="5" height="5" fill="#E8B878"/><rect x="1663" y="741" width="5" height="5" fill="#7EBDF4"/><rect x="1668" y="741" width="5" height="5" fill="#A8603C"/><rect x="1573" y="746" width="5" height="5" fill="#7EBDF4"/><rect x="1588" y="746" width="5" height="5" fill="#F2F2F2"/><rect x="1593" y="746" width="5" height="5" fill="#7EBDF4"/><rect x="1603" y="746" width="5" height="5" fill="#3A7CC8"/><rect x="1608" y="746" width="5" height="5" fill="#D89848"/><rect x="1613" y="746" width="5" height="5" fill="#A8603C"/><rect x="1618" y="746" width="5" height="5" fill="#F2F2F2"/><rect x="1638" y="746" width="5" height="5" fill="#F2F2F2"/><rect x="1643" y="746" width="5" height="5" fill="#7EBDF4"/><rect x="1648" y="746" width="5" height="5" fill="#7EBDF4"/><rect x="1663" y="746" width="5" height="5" fill="#7EBDF4"/><rect x="1668" y="746" width="5" height="5" fill="#3A7CC8"/><path d="M1547 742 H1556 M1551.5 738 V746.5" stroke="#BA7EC0" stroke-width="3"/><path d="M1556 744 L1558.5 741.5 H1563.5 V747 H1558.5 Z" fill="#BA7EC0"/><path d="M1522.5 461.8 L1527.9 467 L1522.5 472.2 Z" fill="none" stroke="#E0E0E0" stroke-width="1.5" stroke-linejoin="miter"/><path d="M1530.6 762 V757.6 H1538.6 L1542.2 761.2 V773 H1536.5 M1538.4 757.6 V761.4 H1542.2" fill="none" stroke="#BDBDBD" stroke-width="1.3"/><circle cx="1529" cy="770" r="3.9" fill="none" stroke="#BDBDBD" stroke-width="1.8" stroke-dasharray="1.9 1.15"/><circle cx="1529" cy="770" r="2.5" fill="none" stroke="#BDBDBD" stroke-width="1.5"/><path d="M1530.6 785 V780.6 H1538.6 L1542.2 784.2 V796 H1536.5 M1538.4 780.6 V784.4 H1542.2" fill="none" stroke="#BDBDBD" stroke-width="1.3"/><circle cx="1529" cy="793" r="3.9" fill="none" stroke="#BDBDBD" stroke-width="1.8" stroke-dasharray="1.9 1.15"/><circle cx="1529" cy="793" r="2.5" fill="none" stroke="#BDBDBD" stroke-width="1.5"/><rect x="1563" y="766" width="5" height="5" fill="#A8603C"/><rect x="1583" y="766" width="5" height="5" fill="#E8B878"/><rect x="1558" y="786" width="5" height="5" fill="#7EBDF4"/><rect x="1563" y="786" width="5" height="5" fill="#7EBDF4"/><rect x="1573" y="786" width="5" height="5" fill="#7EBDF4"/><rect x="1578" y="786" width="5" height="5" fill="#7EBDF4"/><rect x="1583" y="786" width="5" height="5" fill="#3A7CC8"/><rect x="1588" y="786" width="5" height="5" fill="#3A7CC8"/><rect x="1608" y="786" width="5" height="5" fill="#E8B878"/><rect x="1558" y="791" width="5" height="5" fill="#7EBDF4"/><rect x="1573" y="791" width="5" height="5" fill="#7EBDF4"/><rect x="1583" y="791" width="5" height="5" fill="#3A7CC8"/><rect x="1593" y="791" width="5" height="5" fill="#7EBDF4"/><rect x="1598" y="791" width="5" height="5" fill="#A8603C"/></svg>
<div class="t" style="left:1549.30px;top:760.00px;font-size:16px;color:#F1F1F1;transform:scaleX(0.7667);transform-origin:0 0;">a</div>
<div class="t" style="left:1549.00px;top:783.00px;font-size:16px;color:#F1F1F1;transform:scaleX(0.8372);transform-origin:0 0;">A</div>
<div class="a" style="left:2px;top:845px;width:1704px;height:29px;background:#007ACC;"></div>
<svg class="a" style="left:1688px;top:857px" width="16" height="16" viewBox="0 0 16 16"><rect x="13" y="13" width="2" height="2" fill="#5AAAE8"/><rect x="10" y="13" width="2" height="2" fill="#5AAAE8"/><rect x="7" y="13" width="2" height="2" fill="#5AAAE8"/><rect x="4" y="13" width="2" height="2" fill="#5AAAE8"/><rect x="13" y="10" width="2" height="2" fill="#5AAAE8"/><rect x="10" y="10" width="2" height="2" fill="#5AAAE8"/><rect x="7" y="10" width="2" height="2" fill="#5AAAE8"/><rect x="13" y="7" width="2" height="2" fill="#5AAAE8"/><rect x="10" y="7" width="2" height="2" fill="#5AAAE8"/><rect x="13" y="4" width="2" height="2" fill="#5AAAE8"/></svg>
<div class="t" style="left:8.80px;top:854.00px;font-size:16px;color:#F1F1F1;transform:scaleX(0.9041);transform-origin:0 0;">Error HRESULT E_FAIL has been returned from a call to a COM component.  The tab has been closed.</div>
</body></html>
